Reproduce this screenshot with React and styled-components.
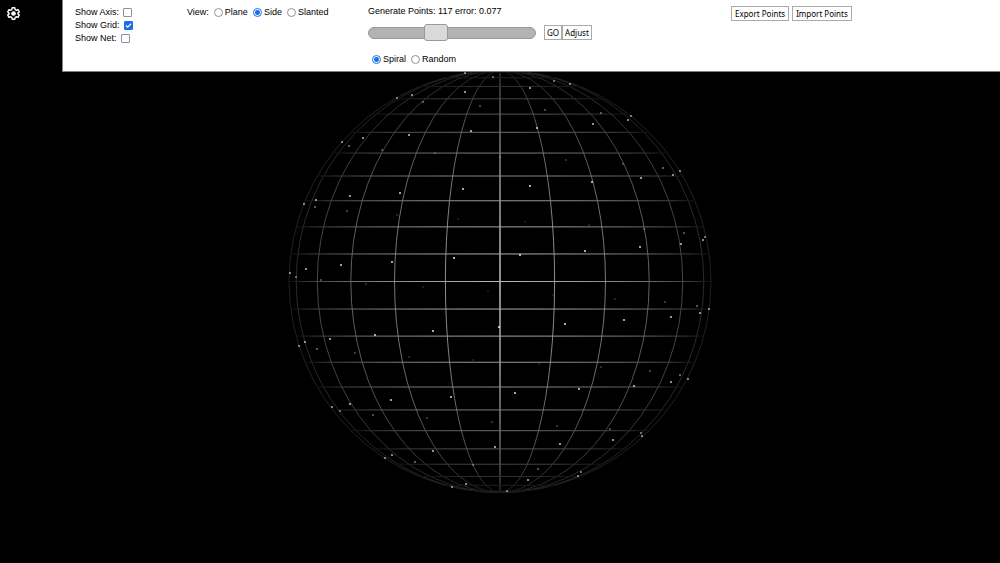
import React, { useState } from "react";
import styled, { createGlobalStyle } from "styled-components";

const RADIUS = 211;
const STEPS = Array.from({ length: 11 }, (_, i) => i + 1);

// x, y on the canvas, following the spiral from the north pole down
const SPIRAL = [
  [465, 73], [493, 77], [554, 81], [570, 84], [530, 88], [465, 92], [412, 95],
  [397, 98], [423, 102], [480, 106], [545, 110], [601, 113], [631, 116],
  [628, 120], [593, 124], [537, 128], [471, 131], [409, 135], [363, 138],
  [342, 142], [349, 146], [382, 150], [435, 153], [500, 157], [566, 160],
  [623, 164], [663, 168], [680, 171], [673, 175], [641, 178], [592, 182],
  [530, 186], [463, 189], [400, 193], [350, 196], [316, 200], [304, 204],
  [315, 207], [347, 211], [397, 215], [458, 219], [525, 222], [589, 225],
  [644, 229], [684, 233], [705, 237], [703, 240], [681, 244], [640, 247],
  [585, 251], [520, 255], [454, 258], [392, 262], [341, 265], [306, 269],
  [290, 273], [296, 277], [321, 280], [366, 284], [423, 287], [488, 291],
  [553, 295], [615, 299], [665, 302], [697, 306], [709, 309], [700, 313],
  [671, 317], [624, 320], [565, 324], [499, 327], [433, 331], [375, 335],
  [330, 339], [305, 342], [299, 346], [317, 349], [355, 353], [409, 357],
  [473, 360], [539, 364], [601, 367], [650, 371], [680, 375], [688, 379],
  [671, 382], [634, 386], [579, 389], [515, 393], [451, 397], [391, 400],
  [350, 404], [332, 407], [340, 411], [373, 415], [427, 418], [492, 422],
  [557, 426], [610, 429], [641, 433], [642, 436], [613, 440], [560, 444],
  [495, 447], [433, 451], [392, 455], [385, 458], [415, 462], [473, 465],
  [538, 469], [581, 472], [578, 476], [528, 480], [466, 484], [452, 487],
  [507, 491],
];

// The spiral runs right to left on the near half and back again on the far one
const pointOpacity = (points, i) => {
  const [x, y] = points[i];
  const before = points[Math.max(i - 1, 0)];
  const after = points[Math.min(i + 1, points.length - 1)];
  const near = after[0] < before[0];
  const dx = (x - 500) / RADIUS;
  const dy = (y - 281) / RADIUS;
  const depth = Math.sqrt(Math.max(0, 1 - dx * dx - dy * dy));
  return near ? 0.6 + 0.25 * depth : 0.6 - 0.5 * depth;
};

const DepthGradient = ({ id, stops }) => (
  <radialGradient
    id={id}
    gradientUnits="userSpaceOnUse"
    cx="500"
    cy="281.5"
    r={RADIUS}
  >
    {stops.map(([offset, color]) => (
      <stop key={offset} offset={offset} stopColor={color} />
    ))}
  </radialGradient>
);

const Globe = ({ showGrid }) => (
  <Canvas viewBox="0 0 1000 563" role="img" aria-label="Points on a sphere">
    <defs>
      <DepthGradient
        id="meridian"
        stops={[
          [0, "#a0a0a0"],
          [0.4, "#848484"],
          [0.7, "#606060"],
          [0.9, "#404040"],
          [1, "#202020"],
        ]}
      />
      <DepthGradient
        id="parallel"
        stops={[
          [0, "#b8b8b8"],
          [0.4, "#989898"],
          [0.7, "#6c6c6c"],
          [0.9, "#3c3c3c"],
          [1, "#0e0e0e"],
        ]}
      />
    </defs>
    {showGrid && (
      <g fill="none">
        <g stroke="url(#meridian)">
          {STEPS.filter((i) => i < 7).map((i) => (
            <ellipse
              key={i}
              cx="500"
              cy="281.5"
              rx={RADIUS * Math.sin((i * Math.PI) / 12)}
              ry={RADIUS}
            />
          ))}
          <path
            d={`M500 ${281.5 - RADIUS}V${281.5 + RADIUS}`}
            strokeWidth="1.8"
          />
        </g>
        <g stroke="url(#parallel)">
          {[...STEPS.map((i) => -i), 0, ...STEPS].map((i) => {
            const angle = (i * Math.PI) / 24;
            const y = 281.5 + RADIUS * Math.sin(angle);
            const half = RADIUS * Math.cos(angle);
            return <path key={i} d={`M${500 - half} ${y}H${500 + half}`} />;
          })}
        </g>
      </g>
    )}
    {SPIRAL.map(([x, y], i) => (
      <circle
        key={i}
        cx={x}
        cy={y}
        r="1.1"
        fill="#fff"
        opacity={pointOpacity(SPIRAL, i)}
      />
    ))}
  </Canvas>
);

const App = () => {
  const [axis, setAxis] = useState(false);
  const [grid, setGrid] = useState(true);
  const [net, setNet] = useState(false);
  const [view, setView] = useState("Side");
  const [mode, setMode] = useState("Spiral");
  const [amount, setAmount] = useState(117);

  return (
    <>
      <GlobalStyle />
      <Globe showGrid={grid} />
      <Page>
        <Settings type="button" aria-label="Settings">
          <svg width="13" height="13" viewBox="0 0 24 24">
            <path
              d="M9.6 1.5h4.8l.7 3.3 2 1.2 3.2-1 2.3 4.1-2.4 2.2v1.4l2.4 2.2-2.3 4.1-3.2-1-2 1.2-.7 3.3H9.6l-.7-3.3-2-1.2-3.2 1-2.3-4.1 2.4-2.2v-1.4L1.4 9.1 3.7 5l3.2 1 2-1.2z"
              fill="none"
              stroke="#fff"
              strokeWidth="2.6"
              strokeLinejoin="round"
            />
            <circle cx="12" cy="12" r="4.3" fill="#fff" />
          </svg>
        </Settings>
        <Panel>
          <Toggles>
            <Check>
              Show Axis:
              <Box checked={axis} onChange={() => setAxis(!axis)} />
            </Check>
            <Check>
              Show Grid:
              <Box checked={grid} onChange={() => setGrid(!grid)} />
            </Check>
            <Check>
              Show Net:
              <Box checked={net} onChange={() => setNet(!net)} />
            </Check>
          </Toggles>
          <Choices>
            <span>View:</span>
            {["Plane", "Side", "Slanted"].map((name) => (
              <Choice key={name}>
                <Dot
                  name="view"
                  checked={view === name}
                  onChange={() => setView(name)}
                />
                {name}
              </Choice>
            ))}
          </Choices>
          <Generate>
            <label htmlFor="amount">
              Generate Points: {amount} error: 0.077
            </label>
            <SliderRow>
              <Slider
                id="amount"
                min="0"
                max="300"
                value={amount}
                onChange={(e) => setAmount(Number(e.target.value))}
              />
              <Actions>
                <Button $pad={2}>GO</Button>
                <Button $pad={2}>Adjust</Button>
              </Actions>
            </SliderRow>
            <Modes>
              {["Spiral", "Random"].map((name) => (
                <Choice key={name}>
                  <Dot
                    name="mode"
                    checked={mode === name}
                    onChange={() => setMode(name)}
                  />
                  {name}
                </Choice>
              ))}
            </Modes>
          </Generate>
          <Files>
            <Button $pad={3}>Export Points</Button>
            <Button $pad={3}>Import Points</Button>
          </Files>
        </Panel>
      </Page>
    </>
  );
};

const GlobalStyle = createGlobalStyle`
  * {
    box-sizing: border-box;
  }

  body {
    margin: 0;
    background: #000;
    color: #000;
    font-family: "Liberation Sans", Arial, sans-serif;
    font-size: 9px;
    line-height: 13px;
    overflow: hidden;
  }
`;

const Canvas = styled.svg`
  position: fixed;
  inset: 0;
  width: 100%;
  height: 100%;
`;

const Page = styled.div`
  position: relative;
  display: flex;
  align-items: flex-start;
`;

const Settings = styled.button`
  display: flex;
  width: 62px;
  padding: 7px;
  border: 0;
  background: none;
  cursor: pointer;
`;

const Panel = styled.header`
  flex: 1;
  display: grid;
  grid-template-columns: 112px 181px 363px 1fr;
  padding: 5px 0 5px 12px;
  background: #fff;
  border-left: 1px solid #808080;
  border-bottom: 1px solid #808080;
`;

const Toggles = styled.div`
  display: flex;
  flex-direction: column;
  align-items: flex-start;
  padding-top: 1px;
`;

const Check = styled.label`
  display: flex;
  align-items: center;
  gap: 4px;
`;

const Box = styled.input.attrs({ type: "checkbox" })`
  appearance: none;
  width: 9px;
  height: 9px;
  margin: 0;
  border: 1px solid #8f8f9d;
  border-radius: 1px;
  background: #fff;

  &:checked {
    border-color: #1a6fe8;
    background: #1a6fe8
      url("data:image/svg+xml,%3Csvg xmlns='http://www.w3.org/2000/svg' viewBox='0 0 8 8'%3E%3Cpath d='M1 4l2 2 4-4' fill='none' stroke='white' stroke-width='1.3'/%3E%3C/svg%3E");
  }
`;

const Choices = styled.div`
  display: flex;
  align-items: flex-start;
  gap: 5px;
  padding-top: 1px;
`;

const Choice = styled.label`
  display: flex;
  align-items: center;
  gap: 2px;
`;

const Dot = styled.input.attrs({ type: "radio" })`
  appearance: none;
  width: 9px;
  height: 9px;
  margin: 0;
  border: 1px solid #8f8f9d;
  border-radius: 50%;
  background: #fff;

  &:checked {
    border-color: #1a6fe8;
    background: radial-gradient(#1a6fe8 2px, #fff 3px);
  }
`;

const Generate = styled.div`
  display: flex;
  flex-direction: column;
  align-items: flex-start;
`;

const SliderRow = styled.div`
  display: flex;
  align-items: center;
  gap: 8px;
  margin: 7px 0 12px;
`;

const Slider = styled.input.attrs({ type: "range" })`
  appearance: none;
  width: 168px;
  height: 12px;
  margin: 0;
  border: 1px solid #999;
  border-radius: 6px;
  background: #b3b3b3;

  &::-webkit-slider-thumb {
    appearance: none;
    width: 24px;
    height: 17px;
    border: 1px solid #999;
    border-radius: 3px;
    background: #dadada;
  }
`;

const Button = styled.button.attrs({ type: "button" })`
  height: 15px;
  padding: 0 ${({ $pad }) => $pad}px;
  border: 1px solid #aaa;
  background: #fff;
  color: #000;
  font-family: "Noto Sans", sans-serif;
  font-size: 8px;
  line-height: 13px;
`;

const Actions = styled.div`
  display: flex;
`;

const Modes = styled(Choices)`
  padding-left: 4px;
`;

const Files = styled.div`
  display: flex;
  gap: 3px;
  align-items: flex-start;
  padding-top: 1px;
`;

export default App;
